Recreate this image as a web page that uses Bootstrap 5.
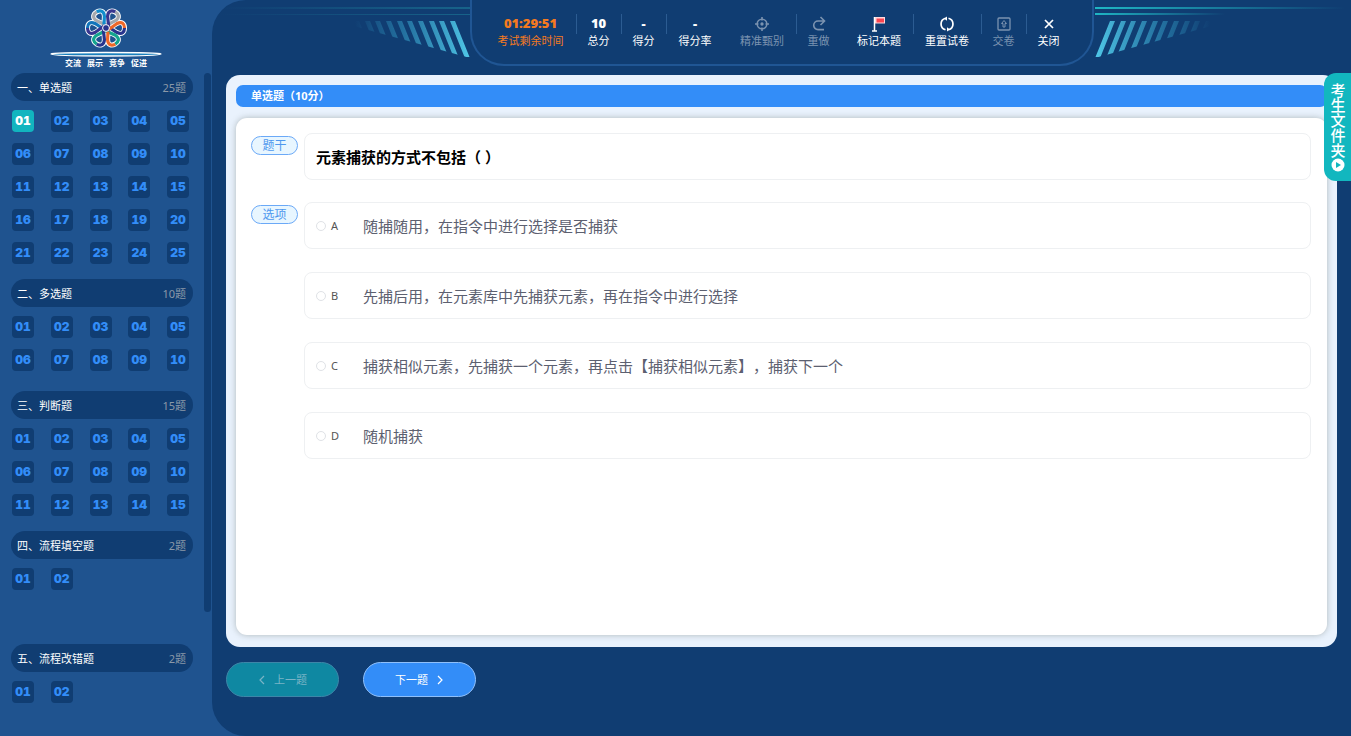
<!DOCTYPE html>
<html lang="zh-CN">
<head>
<meta charset="utf-8">
<meta name="viewport" content="width=device-width, initial-scale=1">
<title>单选题</title>
<link href="https://cdn.jsdelivr.net/npm/bootstrap@5.3.0/dist/css/bootstrap.min.css" rel="stylesheet">
<style>
  body { font-family: "Noto Sans", "Noto Sans CJK SC", sans-serif; font-size: 11px; line-height: 16px; background: #1f538f; color: #fff; text-spacing-trim: space-all; }
  button { font-family: inherit; }

  /* sidebar */
  .exam-side { width: 212px; flex: none; }
  .logo-text { font-size: 8px; line-height: 10px; font-weight: 700; gap: 6px; }
  .side-scroll { padding: 5px 1px 0 11px; }
  .thumb { width: 7px; height: 539px; background: #103d72; border-radius: 4px; }
  .group-box { width: 182px; min-height: 112px; padding-bottom: 15px; }
  .group-box.single { min-height: 113px; }
  .group-head { height: 28px; border-radius: 14px; background: #103d72; padding: 0 7px 0 6px; font-size: 11px; line-height: 29px; margin: 0 0 9px; font-weight: 400; }
  .group-head .total { color: #8b99a8; }
  .num-grid { display: grid; grid-template-columns: repeat(5, 22px); justify-content: space-between; row-gap: 11px; padding: 0 4px 0 1px; }
  .num { width: 22px; height: 22px; border: 0; border-radius: 4px; padding: 0; background: #103d72; color: #338df8; font: 900 12px/22px Inter, sans-serif; font-variant-numeric: tabular-nums; text-align: center; }
  .num.current { background: #12b5bf; color: #fff; }

  /* main area */
  .exam-main { background: #103d72; border-radius: 34px 0 0 34px; padding: 0 14px 39px; min-width: 0; }
  .top-strip { margin: 0 -14px 9px; }
  .top-panel { border: 2px solid #205694; border-top: 0; border-radius: 0 0 34px 34px; height: 66px; padding: 14px 21px 0 14px; }
  .cell { border: 0; background: none; color: #fff; padding: 0; text-align: center; font-size: 11px; line-height: 16px; white-space: nowrap; }
  .cell .top { display: flex; height: 19px; align-items: center; justify-content: center; font-size: 13px; line-height: 19px; font-weight: 900; }
  .cell.off { color: #7b93b0; }
  .cell.clock { color: #f47a20; }
  .w2 { width: 44px; } .w3 { width: 57px; } .w4 { width: 67px; } .w6 { width: 90px; }
  .sep { width: 1px; height: 20px; background: #2c5c92; }
  .skip { width: 5px; }

  .paper { background: #e9f2fd; border-radius: 14px; padding: 10px 10px 12px; }
  .kind { background: #338df8; border-radius: 7px; height: 22px; line-height: 22px; font-weight: 700; padding-left: 15px; margin: 0 0 11px; font-size: 11px; }
  .sheet { background: #fff; border-radius: 11px; box-shadow: 0 0 6px rgba(90, 100, 90, .4); padding: 15px 16px 15px 15px; }
  .stem-row { margin-bottom: 22px; }
  .tag { width: 47px; height: 19px; border: 1px solid #6ba9f7; border-radius: 10px; background: #e8f6ff; color: #4f98ee; font-size: 12px; line-height: 17px; text-align: center; margin: 3px 6px 0 0; flex: none; }
  .line-box { border: 1px solid #eef0f2; border-radius: 8px; height: 47px; padding: 0 11px; }
  .stem { color: #000; font-size: 15px; font-weight: 700; margin: 0; }
  .opts { display: grid; gap: 23px; }
  .opts .form-check-input { width: 10px; height: 10px; margin: 0 5px 0 0; border-color: #dfe2e6; flex: none; }
  .opt-key { width: 32px; color: #555; font-size: 11px; }
  .opt-text { color: #5c6070; font-size: 15px; line-height: 24px; }

  .foot { padding-top: 15px; gap: 24px; }
  .nav-btn { width: 113px; height: 35px; border: 1px solid #8fc0fb; font-size: 11px; line-height: 16px; color: #fff; background: #338df8; gap: 9px; padding: 0; }
  .nav-btn:disabled { background: #0f88a2; border-color: #3d86a8; color: #7ab4c6; opacity: 1; }

  .file-tab { top: 73px; right: 0; width: 27px; height: 108px; border: 0; border-radius: 12px 0 0 12px; background: #12b7bf; color: #fff; padding: 0; font-size: 15px; font-weight: 500; line-height: 16px; }
  .file-tab span { writing-mode: vertical-rl; }
</style>
</head>
<body>
<div class="d-flex vh-100 overflow-hidden position-relative">
  <aside class="exam-side d-flex flex-column">
    <div class="d-flex flex-column align-items-center pt-1">
      <svg width="114" height="54" viewBox="50 4 114 54" aria-hidden="true">
        <defs>
          <path id="loop" d="M0-4L-4.500-11C-7-16-4-18.500 0-18.500S7-16 4.500-11Z"/>
          <path id="half-l" d="M2-2L-4.500-11C-7-16-4-18.500 0-18.500"/>
          <path id="half-r" d="M0-4L4.500-11C7-16 4-18.500 0-18.500"/>
        </defs>
        <g transform="translate(107 28)" fill="none">
          <g stroke="#fff" stroke-width="5">
            <use href="#loop" transform="rotate(-30)"/><use href="#loop" transform="rotate(30)"/><use href="#loop" transform="rotate(90)"/>
            <use href="#loop" transform="rotate(150)"/><use href="#loop" transform="rotate(210)"/><use href="#loop" transform="rotate(270)"/>
          </g>
          <g stroke-width="3.200">
            <use href="#half-l" stroke="#a5a9ae" transform="rotate(-30)"/><use href="#half-r" stroke="#118dcc" transform="rotate(-30)"/>
            <use href="#half-r" stroke="#a5a9ae" transform="rotate(30)"/><use href="#half-l" stroke="#37368f" transform="rotate(30)"/>
            <use href="#half-r" stroke="#28348d" transform="rotate(90)"/><use href="#half-l" stroke="#ef6828" transform="rotate(90)"/>
            <use href="#half-l" stroke="#13a58e" transform="rotate(150)"/><use href="#half-r" stroke="#ef6828" transform="rotate(150)"/>
            <use href="#half-r" stroke="#13a58e" transform="rotate(210)"/><use href="#half-l" stroke="#28348d" transform="rotate(210)"/>
            <use href="#half-r" stroke="#1275bb" transform="rotate(270)"/><use href="#half-l" stroke="#37368f" transform="rotate(270)"/>
          </g>
          <circle r="3.400" fill="#28348d" stroke="#fff" stroke-width="1"/>
        </g>
        <path d="M52 54Q53 52.500 107 52.500T162 54Q161 56 107 56T52 54Z" fill="#1a80bd" stroke="#fff" stroke-width="1.300"/>
      </svg>
      <div class="logo-text d-flex"><span>交流</span><span>展示</span><span>竞争</span><span>促进</span></div>
    </div>
    <div class="side-scroll d-flex justify-content-between">
      <nav id="groups"></nav>
      <div class="thumb"></div>
    </div>
  </aside>

  <main class="exam-main flex-grow-1 d-flex flex-column">
    <div class="top-strip d-flex">
      <div class="flex-fill text-end w-25">
        <svg width="250" height="60" viewBox="0 0 250 60" aria-hidden="true">
          <defs>
            <linearGradient id="fade" gradientUnits="userSpaceOnUse" x1="135" y1="0" x2="250" y2="0"><stop offset="0" stop-color="#2b8fb8" stop-opacity="0"/><stop offset=".4" stop-color="#2a83b0" stop-opacity=".7"/><stop offset="1" stop-color="#50c8e8"/></linearGradient>
            <linearGradient id="beam" gradientUnits="userSpaceOnUse" x1="0" y1="0" x2="250" y2="0"><stop offset="0" stop-color="#1c7d99" stop-opacity="0"/><stop offset="1" stop-color="#1c7d99" stop-opacity=".6"/></linearGradient>
            <linearGradient id="beam2" gradientUnits="userSpaceOnUse" x1="0" y1="0" x2="250" y2="0"><stop offset="0" stop-color="#1fb6c4" stop-opacity="0"/><stop offset="1" stop-color="#1fb6c4"/></linearGradient>
            <linearGradient id="beam3" gradientUnits="userSpaceOnUse" x1="120" y1="0" x2="250" y2="0"><stop offset="0" stop-color="#1fb6c4" stop-opacity="0"/><stop offset="1" stop-color="#1fb6c4"/></linearGradient>
            <clipPath id="wedge"><path d="M120 21H250V58L130 25Z"/></clipPath>
            <path id="bars" clip-path="url(#wedge)" fill="url(#fade)" d="M230 21h5l14.500 36h-5zM219 21h5l14.500 36h-5zM209 21h5l14.500 36h-5zM198 21h5l14.500 36h-5zM187 21h5l14.500 36h-5zM177 21h5l14.500 36h-5zM166 21h5l14.500 36h-5zM155 21h5l14.500 36h-5zM145 21h5l14.500 36h-5zM134 21h5l14.500 36h-5z"/>
          </defs>
          <path d="M0 7h250v2H0zM0 14h250v1H0z" fill="url(#beam)"/>
          <use href="#bars"/>
        </svg>
      </div>
      <div class="top-panel d-flex align-items-start flex-shrink-0">
        <div class="cell clock w6"><span class="top">01:29:51</span>考试剩余时间</div><i class="sep"></i>
        <div class="cell w2"><span class="top">10</span>总分</div><i class="sep"></i>
        <div class="cell w2"><span class="top">-</span>得分</div><i class="sep"></i>
        <div class="cell w3"><span class="top">-</span>得分率</div><i class="skip"></i>
        <button class="cell w4 off" disabled><span class="top"><svg width="14" height="14" viewBox="0 0 16 16" fill="none" stroke="currentColor" stroke-width="1.800"><circle cx="8" cy="8" r="5.500"/><path d="M8 0v4M8 12v4M0 8h4M12 8h4"/><circle cx="8" cy="8" r="1" fill="currentColor"/></svg></span>精准甄别</button><i class="sep"></i>
        <button class="cell w2 off" disabled><span class="top"><svg width="14" height="15" fill="none" stroke="currentColor" stroke-width="1.600"><path d="M8.500 1l4 4-4 4M12 5H6a4.300 4.300 0 0 0 0 8.600h6"/></svg></span>重做</button><i class="skip"></i>
        <button class="cell w4"><span class="top"><svg width="14" height="16"><path d="M2.500 1v14M0 15h5" fill="none" stroke="#fff" stroke-width="1.500"/><path d="M3 1h10v6.500H3z" fill="#ffd9dc"/><path d="M4.500 2.500H12V6.500H4.500z" fill="#fb4550"/></svg></span>标记本题</button><i class="sep"></i>
        <button class="cell w4"><span class="top"><svg width="16" height="16" fill="none" stroke="#fff" stroke-width="1.700"><path d="M6.500 2.200a6 6 0 0 0 0 11.600M9.500 2.200a6 6 0 0 1 0 11.600"/><path d="M8 .5v4.300L5 2.600zM8 15.500v-4.300l3 2.200z" fill="#fff" stroke="none"/></svg></span>重置试卷</button><i class="sep"></i>
        <button class="cell w2 off" disabled><span class="top"><svg width="14" height="14" fill="none" stroke="currentColor" stroke-width="1.300"><rect x="1" y="1" width="12" height="12" rx="1"/><path d="M7 3.500L4.500 6.500H6V10h2V6.500h1.500z" stroke-width="1"/></svg></span>交卷</button><i class="sep"></i>
        <button class="cell w2"><span class="top"><svg width="10" height="10" stroke="#fff" stroke-width="1.700"><path d="M1 1l8 8M9 1L1 9"/></svg></span>关闭</button>
      </div>
      <div class="flex-fill w-25">
        <svg width="250" height="60" viewBox="0 0 250 60" aria-hidden="true">
          <g transform="matrix(-1 0 0 1 251 0)"><path d="M0 7h250v2H0z" fill="url(#beam2)"/><path d="M0 13h250v2H0z" fill="url(#beam3)"/><use href="#bars"/></g>
        </svg>
      </div>
    </div>

    <section class="paper flex-grow-1 d-flex flex-column">
      <h1 class="kind">单选题（10分）</h1>
      <div class="sheet flex-grow-1">
        <div class="d-flex stem-row">
          <span class="tag">题干</span>
          <div class="line-box flex-grow-1 d-flex align-items-center"><p class="stem">元素捕获的方式不包括（ ）</p></div>
        </div>
        <div class="d-flex">
          <span class="tag">选项</span>
          <div class="opts flex-grow-1">
            <label class="line-box d-flex align-items-center"><input class="form-check-input" type="radio" name="answer"><span class="opt-key">A</span><span class="opt-text">随捕随用，在指令中进行选择是否捕获</span></label>
            <label class="line-box d-flex align-items-center"><input class="form-check-input" type="radio" name="answer"><span class="opt-key">B</span><span class="opt-text">先捕后用，在元素库中先捕获元素，再在指令中进行选择</span></label>
            <label class="line-box d-flex align-items-center"><input class="form-check-input" type="radio" name="answer"><span class="opt-key">C</span><span class="opt-text">捕获相似元素，先捕获一个元素，再点击【捕获相似元素】，捕获下一个</span></label>
            <label class="line-box d-flex align-items-center"><input class="form-check-input" type="radio" name="answer"><span class="opt-key">D</span><span class="opt-text">随机捕获</span></label>
          </div>
        </div>
      </div>
    </section>

    <div class="foot d-flex">
      <button class="btn nav-btn rounded-pill d-flex align-items-center justify-content-center" disabled><svg width="7" height="10" fill="none" stroke="currentColor" stroke-width="1.200"><path d="M6 1L2 5l4 4"/></svg>上一题</button>
      <button class="btn nav-btn rounded-pill d-flex align-items-center justify-content-center">下一题<svg width="7" height="10" fill="none" stroke="currentColor" stroke-width="1.200"><path d="M1 1l4 4-4 4"/></svg></button>
    </div>
  </main>

  <button class="file-tab position-absolute d-flex flex-column align-items-center justify-content-center"><span>考生文件夹</span><svg width="14" height="14"><circle cx="7" cy="7" r="6.500" fill="#fff"/><path d="M5 4l5 3-5 3z" fill="#12b7bf"/></svg></button>
</div>
<script src="https://cdn.jsdelivr.net/npm/bootstrap@5.3.0/dist/js/bootstrap.bundle.min.js"></script>
<script>
  const groups = [['一、单选题', 25], ['二、多选题', 10], ['三、判断题', 15], ['四、流程填空题', 2], ['五、流程改错题', 2]];
  document.getElementById('groups').innerHTML = groups.map(([name, n], g) =>
    `<section class="group-box${n < 6 ? ' single' : ''}"><h2 class="group-head d-flex justify-content-between"><span>${name}</span><span class="total">${n}题</span></h2><div class="num-grid">` +
    Array.from({ length: n }, (_, i) => `<button class="num${g + i === 0 ? ' current' : ''}">${String(i + 1).padStart(2, '0')}</button>`).join('') +
    '</div></section>').join('');
</script>
</body>
</html>
